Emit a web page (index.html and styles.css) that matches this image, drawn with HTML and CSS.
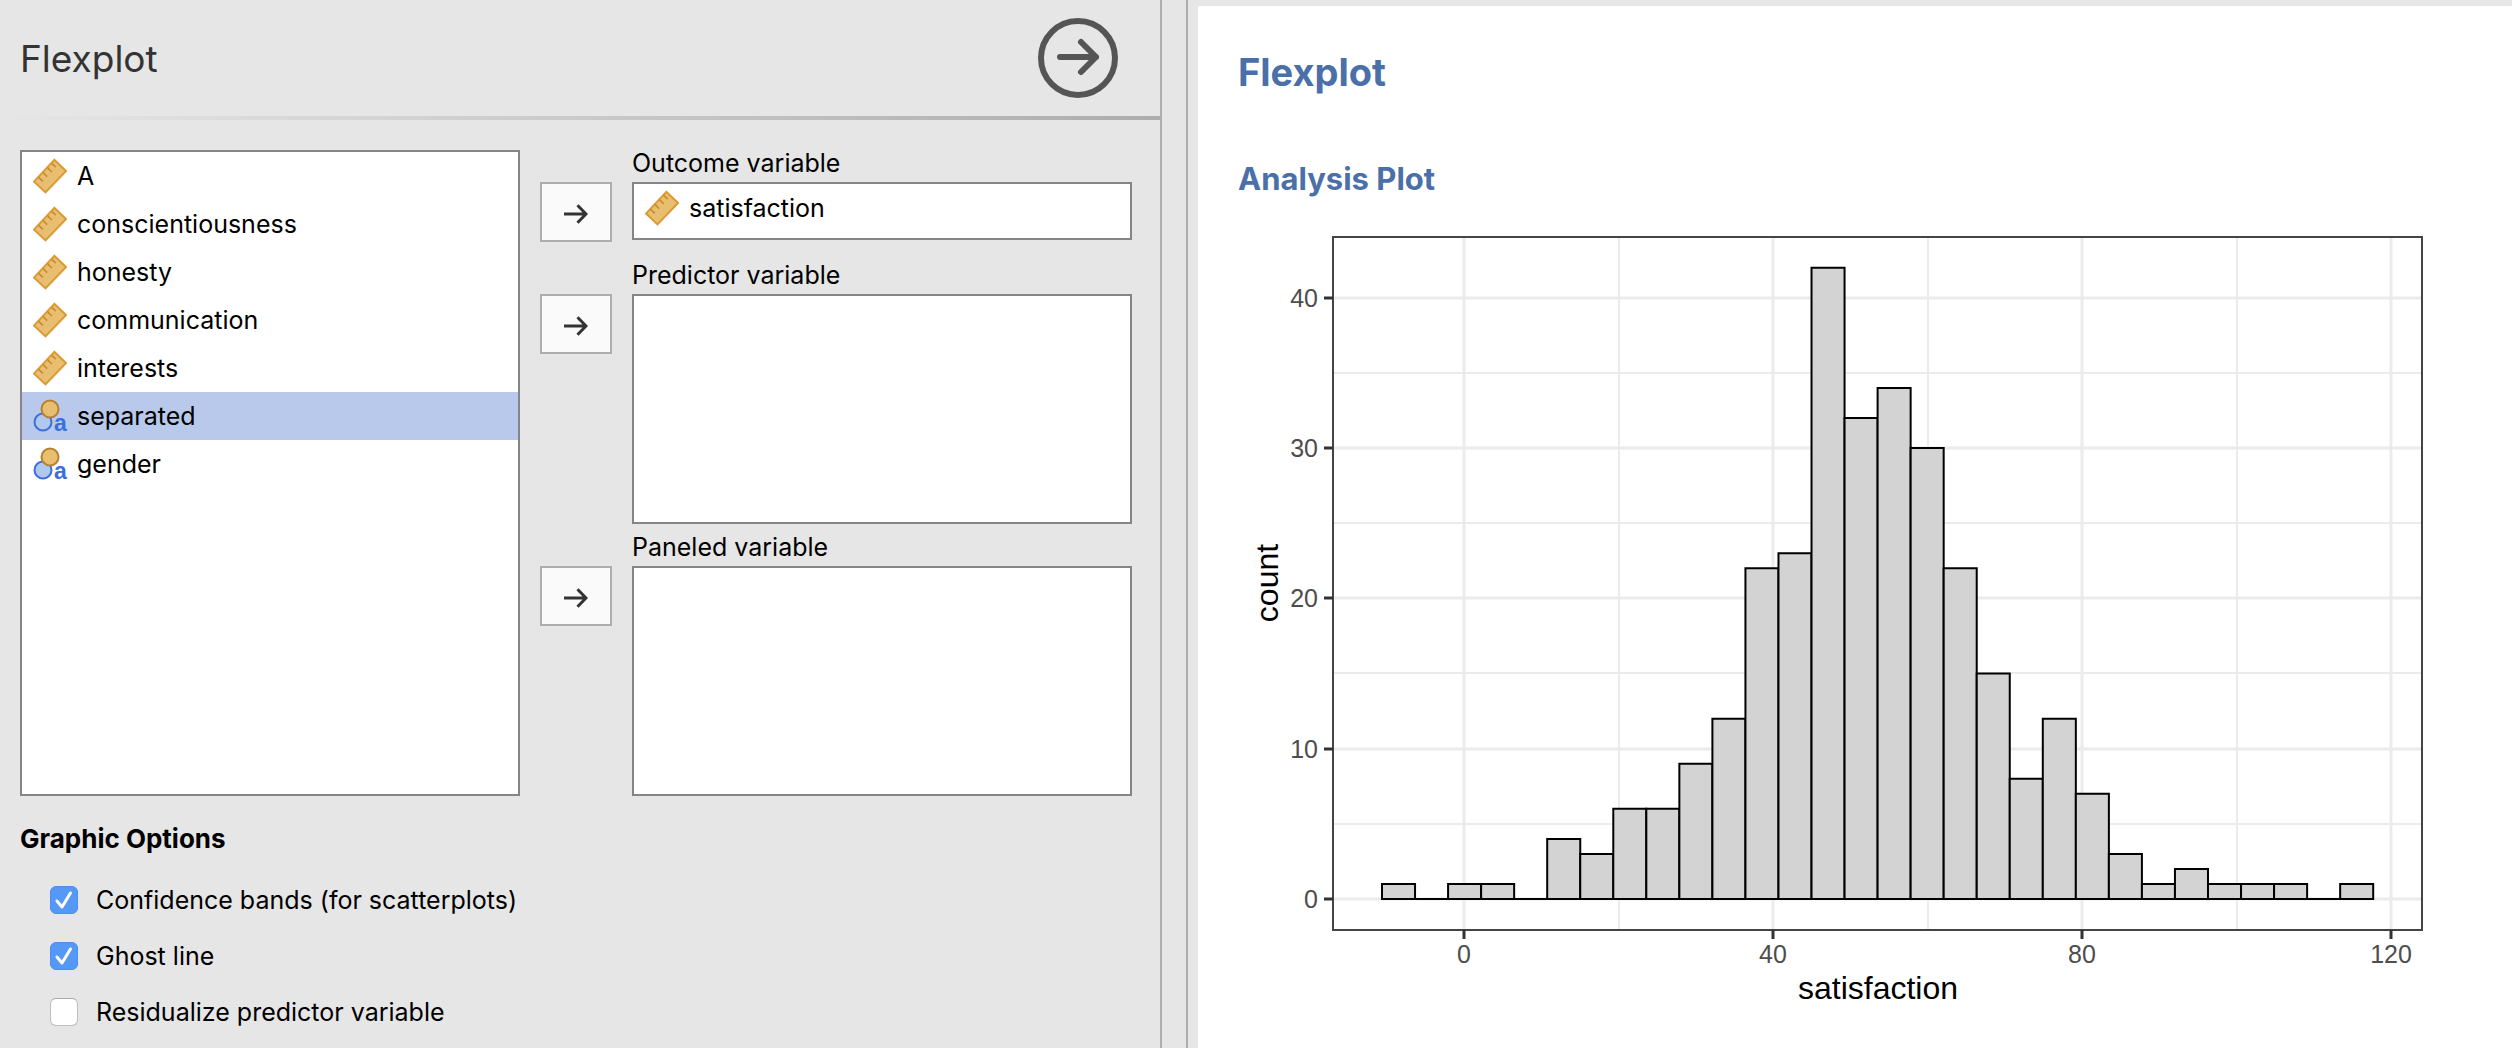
FILE: index.html
```html
<!DOCTYPE html>
<html lang="en">
<head>
<meta charset="utf-8">
<meta name="viewport" content="width=device-width, initial-scale=1">
<title>Flexplot</title>
<link rel="stylesheet" href="styles.css">
</head>
<body>
<svg class="symbols" aria-hidden="true">
  <symbol id="ruler" viewBox="0 0 34 36">
    <path d="M21.3 1.8 33 13 12.5 34.4 1 23.6Z" fill="#e8be70" stroke="#dc9a35" stroke-width="2"/>
    <path d="M18.4 5.2l4.4 4M14.4 9.6l4.4 4.4M10 14.4l4.2 4.4M5.4 19.2l4.4 4.2" fill="none" stroke="#c98a2c" stroke-width="1.6"/>
  </symbol>
  <symbol id="arrow" viewBox="0 0 24 20">
    <path d="M0 10h22M13.5 1.2 22 10l-8.500 8.800" fill="none" stroke="#333" stroke-width="3"/>
  </symbol>
  <symbol id="check" viewBox="0 0 28 28">
    <path d="M7 15l5 6 8.500-14" fill="none" stroke="#fff" stroke-width="3" stroke-linecap="round" stroke-linejoin="round"/>
  </symbol>
</svg>

<main class="app">
  <section class="options">
    <header class="options-header">
      <h1 class="options-title">Flexplot</h1>
      <button class="close-button" type="button" aria-label="Close options">
        <svg viewBox="0 0 80 80" width="80" height="80" fill="none" stroke="#555" stroke-width="6" stroke-linecap="round" stroke-linejoin="round" aria-hidden="true">
          <circle cx="40" cy="40" r="37"/>
          <path d="M22 39h36M43 24l15 15-15 15"/>
        </svg>
      </button>
    </header>
    <div class="header-rule"></div>

    <div class="assigner">
      <ul class="box supplier" role="listbox" aria-label="Variables">
        <li class="variable" role="option"><svg class="variable-icon" aria-hidden="true"><use href="#ruler"/></svg>A</li>
        <li class="variable" role="option"><svg class="variable-icon" aria-hidden="true"><use href="#ruler"/></svg>conscientiousness</li>
        <li class="variable" role="option"><svg class="variable-icon" aria-hidden="true"><use href="#ruler"/></svg>honesty</li>
        <li class="variable" role="option"><svg class="variable-icon" aria-hidden="true"><use href="#ruler"/></svg>communication</li>
        <li class="variable" role="option"><svg class="variable-icon" aria-hidden="true"><use href="#ruler"/></svg>interests</li>
        <li class="variable selected" role="option" aria-selected="true">
          <svg class="variable-icon" viewBox="0 0 34 36" aria-hidden="true">
            <circle class="nominal-back" cx="10" cy="24" r="8.500"/>
            <circle class="nominal-front" cx="17" cy="11" r="8.500"/>
            <text class="nominal-letter" x="21" y="33">a</text>
          </svg>separated</li>
        <li class="variable" role="option">
          <svg class="variable-icon" viewBox="0 0 34 36" aria-hidden="true">
            <circle class="nominal-back" cx="10" cy="24" r="8.500"/>
            <circle class="nominal-front" cx="17" cy="11" r="8.500"/>
            <text class="nominal-letter" x="21" y="33">a</text>
          </svg>gender</li>
      </ul>

      <h2 class="target-label" id="outcome">Outcome variable</h2>
      <button class="assign" type="button" aria-label="Assign outcome variable"><svg width="24" height="20" aria-hidden="true"><use href="#arrow"/></svg></button>
      <ul class="box target single" role="listbox" aria-labelledby="outcome">
        <li class="variable" role="option"><svg class="variable-icon" aria-hidden="true"><use href="#ruler"/></svg>satisfaction</li>
      </ul>

      <h2 class="target-label spaced" id="predictor">Predictor variable</h2>
      <button class="assign" type="button" aria-label="Assign predictor variable"><svg width="24" height="20" aria-hidden="true"><use href="#arrow"/></svg></button>
      <ul class="box target" role="listbox" aria-labelledby="predictor"></ul>

      <h2 class="target-label near" id="paneled">Paneled variable</h2>
      <button class="assign" type="button" aria-label="Assign paneled variable"><svg width="24" height="20" aria-hidden="true"><use href="#arrow"/></svg></button>
      <ul class="box target" role="listbox" aria-labelledby="paneled"></ul>
    </div>

    <fieldset class="graphic-options">
      <legend class="group-title">Graphic Options</legend>
      <label class="option"><span class="tick"><input type="checkbox" checked><svg aria-hidden="true"><use href="#check"/></svg></span>Confidence bands (for scatterplots)</label>
      <label class="option"><span class="tick"><input type="checkbox" checked><svg aria-hidden="true"><use href="#check"/></svg></span>Ghost line</label>
      <label class="option"><span class="tick"><input type="checkbox"><svg aria-hidden="true"><use href="#check"/></svg></span>Residualize predictor variable</label>
    </fieldset>
  </section>

  <div class="splitter"></div>

  <section class="results">
    <h1 class="results-title">Flexplot</h1>
    <h2 class="results-subtitle">Analysis Plot</h2>
    <svg class="plot" viewBox="0 0 1200 800" role="img" aria-label="Histogram of satisfaction">
      <g class="grid-minor">
        <path d="M381 17V710M690 17V710M999 17V710"/>
        <path d="M95 604H1184M95 453H1184M95 303H1184M95 153H1184"/>
      </g>
      <g class="grid-major">
        <path d="M226 17V710M535 17V710M844 17V710M1153 17V710"/>
        <path d="M95 679H1184M95 529H1184M95 378H1184M95 228H1184M95 78H1184"/>
      </g>
      <!-- one unit across is one bin, one unit up is one case -->
      <g class="bars" transform="translate(144 679) scale(33.040 -15.030)">
        <path d="M0 0H30"/>
        <rect x="0" width="1" height="1"/>
        <rect x="2" width="1" height="1"/>
        <rect x="3" width="1" height="1"/>
        <rect x="5" width="1" height="4"/>
        <rect x="6" width="1" height="3"/>
        <rect x="7" width="1" height="6"/>
        <rect x="8" width="1" height="6"/>
        <rect x="9" width="1" height="9"/>
        <rect x="10" width="1" height="12"/>
        <rect x="11" width="1" height="22"/>
        <rect x="12" width="1" height="23"/>
        <rect x="13" width="1" height="42"/>
        <rect x="14" width="1" height="32"/>
        <rect x="15" width="1" height="34"/>
        <rect x="16" width="1" height="30"/>
        <rect x="17" width="1" height="22"/>
        <rect x="18" width="1" height="15"/>
        <rect x="19" width="1" height="8"/>
        <rect x="20" width="1" height="12"/>
        <rect x="21" width="1" height="7"/>
        <rect x="22" width="1" height="3"/>
        <rect x="23" width="1" height="1"/>
        <rect x="24" width="1" height="2"/>
        <rect x="25" width="1" height="1"/>
        <rect x="26" width="1" height="1"/>
        <rect x="27" width="1" height="1"/>
        <rect x="29" width="1" height="1"/>
      </g>
      <rect class="frame" x="95" y="17" width="1089" height="693"/>
      <path class="ticks" d="M86 679h9M86 529h9M86 378h9M86 228h9M86 78h9M226 710v9M535 710v9M844 710v9M1153 710v9"/>
      <g class="y-labels">
        <text x="80" y="688">0</text>
        <text x="80" y="538">10</text>
        <text x="80" y="387">20</text>
        <text x="80" y="237">30</text>
        <text x="80" y="87">40</text>
      </g>
      <g class="x-labels">
        <text x="226" y="743">0</text>
        <text x="535" y="743">40</text>
        <text x="844" y="743">80</text>
        <text x="1153" y="743">120</text>
      </g>
      <text class="axis-title" x="640" y="779">satisfaction</text>
      <text class="axis-title" transform="translate(40 363) rotate(-90)">count</text>
    </svg>
  </section>
</main>
</body>
</html>
```

FILE: styles.css
```css
* {
  box-sizing: border-box;
}

body {
  margin: 0;
  background: #e6e6e6;
  color: #000;
  font-family: Inter, "Liberation Sans", sans-serif;
  font-size: 25px;
}

h1,
h2,
ul {
  margin: 0;
  padding: 0;
}

.symbols {
  display: none;
}

.app {
  display: grid;
  grid-template-columns: minmax(0, 1162fr) 26px minmax(0, 1324fr);
  min-height: 100vh;
}

/* Options panel */

.options {
  border-right: 2px solid #adadad;
}

.options-header {
  display: flex;
  align-items: center;
  justify-content: space-between;
  height: 116px;
  padding: 0 42px 0 20px;
}

.options-title {
  color: #333;
  font-size: 37px;
  font-weight: 400;
}

.close-button {
  display: block;
  padding: 0;
  border: 0;
  background: none;
}

.close-button svg {
  display: block;
}

.header-rule {
  height: 4px;
  background: linear-gradient(to right, #e6e6e6, #adadad);
}

.assigner {
  display: grid;
  grid-template-columns: minmax(0, 1fr) 72px minmax(0, 1fr);
  column-gap: 20px;
  padding: 30px 28px 0 20px;
}

.box {
  border: 2px solid #858585;
  background: #fff;
  list-style: none;
}

.supplier {
  grid-column: 1;
  grid-row: 1 / span 6;
}

.variable {
  display: flex;
  align-items: center;
  gap: 10px;
  height: 48px;
  padding-left: 11px;
}

.variable.selected {
  background: #b9c9eb;
}

.variable-icon {
  flex: none;
  width: 34px;
  height: 36px;
  overflow: visible;
}

.nominal-back {
  fill: #b0c7f1;
  stroke: #3a6fdc;
  stroke-width: 2px;
}

.nominal-front {
  fill: #e8be70;
  stroke: #b5832f;
  stroke-width: 2px;
}

.nominal-letter {
  fill: #3a6fdc;
  font: bold 23px "Liberation Sans", sans-serif;
}

.target-label {
  grid-column: 3;
  padding-bottom: 6px;
  font-size: 25px;
  font-weight: 400;
  line-height: 26px;
}

.target-label.spaced {
  margin-top: 20px;
}

.target-label.near {
  margin-top: 10px;
}

.assign {
  grid-column: 2;
  display: flex;
  align-items: center;
  justify-content: center;
  height: 60px;
  padding: 4px 0 0;
  border: 2px solid #adadad;
  background: #fafafa;
}

.target {
  grid-column: 3;
  height: 230px;
}

.target.single {
  height: 58px;
}

.graphic-options {
  margin: 0;
  padding: 28px 20px 0;
  border: 0;
}

.group-title {
  float: left;
  width: 100%;
  padding: 0;
  margin-bottom: 32px;
  font-size: 26px;
  font-weight: 700;
  line-height: 30px;
}

.option {
  display: flex;
  clear: both;
  align-items: center;
  gap: 18px;
  height: 28px;
  margin: 0 0 28px 30px;
}

.option:last-child {
  margin-bottom: 20px;
}

.tick {
  display: grid;
  width: 28px;
  height: 28px;
}

.tick input,
.tick svg {
  grid-area: 1 / 1;
  width: 28px;
  height: 28px;
  margin: 0;
}

.tick input {
  appearance: none;
  border: 1px solid #bdbdbd;
  border-top-color: #a8a8a8;
  border-radius: 6px;
  background: #fff;
}

.tick input:checked {
  border-color: #4a8ef0;
  background: #5698f5;
}

.tick svg {
  pointer-events: none;
  visibility: hidden;
}

.tick input:checked + svg {
  visibility: visible;
}

.splitter {
  border-right: 2px solid #adadad;
}

/* Results */

.results {
  margin: 6px 0 0 10px;
  padding: 42px 40px 20px;
  background: #fff;
  color: #4a6fa9;
}

.results-title {
  font-size: 38px;
  line-height: 48px;
}

.results-subtitle {
  margin-top: 64px;
  font-size: 31px;
  line-height: 38px;
}

.plot {
  display: block;
  width: 100%;
  max-width: 1200px;
  margin-top: 22px;
  font-family: "Liberation Sans", Arial, sans-serif;
}

.grid-minor,
.grid-major {
  fill: none;
  stroke: #ebebeb;
  stroke-width: 2px;
}

.grid-major {
  stroke-width: 3px;
}

.bars {
  fill: #d3d3d3;
  stroke: #000;
  stroke-width: 2px;
}

.bars * {
  vector-effect: non-scaling-stroke;
}

.frame {
  fill: none;
  stroke: #444;
  stroke-width: 2px;
}

.ticks {
  fill: none;
  stroke: #333;
  stroke-width: 3px;
}

.y-labels,
.x-labels {
  fill: #4d4d4d;
  font-size: 25px;
  text-anchor: end;
}

.x-labels {
  text-anchor: middle;
}

.axis-title {
  fill: #000;
  font-size: 32px;
  text-anchor: middle;
}
```
